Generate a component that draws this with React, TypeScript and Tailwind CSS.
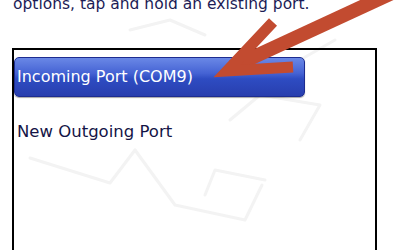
import React from "react";

export default function App() {
  return (
    <div
      className="relative w-[400px] h-[250px] overflow-hidden bg-white"
      style={{ fontFamily: '"DejaVu Sans", Verdana, sans-serif' }}
    >
      {/* faint watermark */}
      <svg className="absolute left-0 top-0" width="400" height="250" viewBox="0 0 400 250" fill="none">
        <g stroke="#f3f3f3" strokeWidth="3" strokeLinejoin="round" strokeLinecap="round">
          <path d="M30 158 L110 183 L135 150" />
          <path d="M135 150 L175 205 L245 220 L262 185" />
          <path d="M205 195 L215 170 L265 180" />
          <path d="M230 120 L260 95 L320 105 L300 140" />
          <path d="M130 30 L170 20 L205 35" />
          <path d="M300 60 L335 40" />
        </g>
      </svg>

      <div className="relative">
        <div className="ml-[13px] mt-[-6px] h-[20px] text-[15.5px] leading-[20px] text-[#1c1c56] whitespace-nowrap">
          options, tap and hold an existing port.
        </div>

        <div className="ml-[12px] mt-[34px] w-[365px] h-[230px] border-2 border-black pt-[7px]">
          <div className="w-[291px] h-[40px] rounded-[5px] border border-[#1d2c90] bg-[linear-gradient(to_bottom,#6a88e6_0%,#4563d4_40%,#2e4cc2_55%,#283eae_100%)] shadow-[0_1px_1px_rgba(0,0,0,0.35)] flex items-center pl-[2px]">
            <span className="text-[16px] leading-[20px] text-white whitespace-nowrap">
              Incoming Port (COM9)
            </span>
          </div>
          <div className="mt-[25px] pl-[3px] text-[16.5px] leading-[20px] text-[#141446] whitespace-nowrap">
            New Outgoing Port
          </div>
        </div>
      </div>

      {/* red arrow */}
      <svg className="absolute left-0 top-0" width="400" height="250" viewBox="0 0 400 250" fill="none">
        <g stroke="#c24b30" strokeLinecap="butt" strokeLinejoin="miter" strokeMiterlimit="10">
          <line x1="405" y1="-13" x2="232" y2="67" strokeWidth="14" />
          <polyline points="273,22 227,71 293,67" strokeWidth="11" />
        </g>
      </svg>
    </div>
  );
}
